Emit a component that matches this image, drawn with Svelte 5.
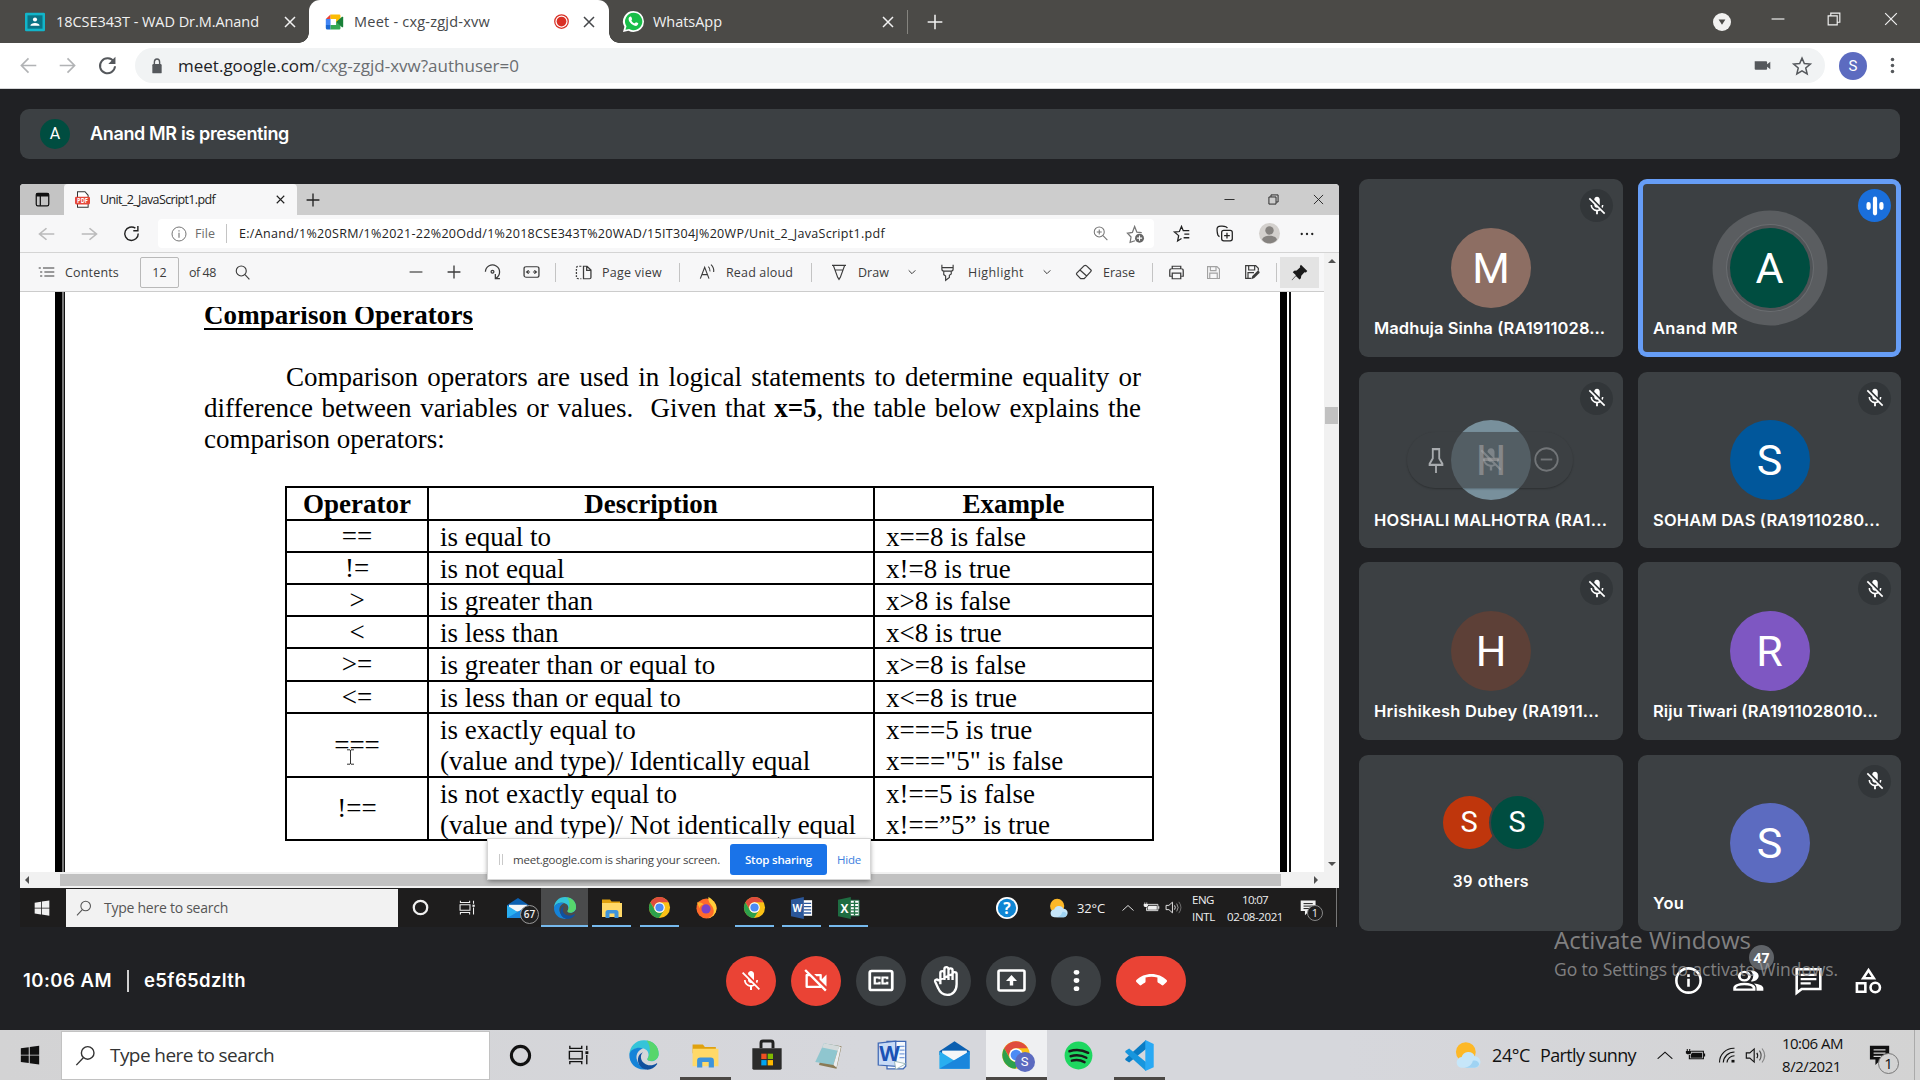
<script>
  // Adjusts tracking so that a label fills the width its slot reserves.
  function fit(node, width) {
    if (!width) return;
    const natural = node.getBoundingClientRect().width;
    const count = node.textContent.length;
    node.style.letterSpacing = (width - natural) / count + 'px';
  }

  const chrome = '<circle cx="12" cy="12" r="11" fill="#fbc116"/><path d="M2.500 6.500A11 11 0 0 1 21.500 6.500H12a5.500 5.500 0 0 0-5 7.500z" fill="#df4c3e"/><path d="M2.500 6.500A11 11 0 0 0 11.500 23L16.500 15A5.500 5.500 0 0 1 7 14.600z" fill="#2da14c"/><circle cx="12" cy="12" r="5.500" fill="#fff"/><circle cx="12" cy="12" r="4.300" fill="#4c8bf5"/>';
  const edge = '<path d="M12 1C5.500 1 1.300 5.800 1 11.800 3.500 7 8 6.300 11 7c3.500.8 4.800 3.400 4.300 6-.4 1.600-1.200 2-.6 2.800 1.600 1.900 8.300 1 8.300-4.600C23 5 18 1 12 1z" fill="#35c4d8"/><path d="M14 1.200C19.500 2 23 6 23 11.200c0 4-4.500 6-7.500 5-1.300-.6-1.200-1.200-.4-2.200C17 10 17 5 14 1.200z" fill="#57d66c"/><path d="M1 11.800C2 7 8 5.800 11.300 7.200 7 8.500 5.600 12.500 6.800 16c1.200 3.800 4.200 6.300 7.200 6.700C6.500 24 .8 18.500 1 11.800z" fill="#1583d8"/><path d="M11.300 10c-3 2.200-2 8.500 4 9.600 2.500.4 4.400-.3 5.900-1.300.5-.3.9.2.6.7-3.200 4.800-9.600 5.200-12.600 1.500C6.300 17 7 11.500 11.300 10z" fill="#10509e"/>';
  const folder = '<path d="M2 3.500h8l1.500 2H20v5H2z" fill="#e0a10e"/><path d="M2 7h20v14H2z" fill="#ffd968"/><path d="M5.500 22v-5.500a2.500 2.500 0 0 1 2.500-2.500h8a2.500 2.500 0 0 1 2.500 2.500V22h-4v-4.500h-5V22z" fill="#3d94dc"/>';
  const mail = '<path d="M1 9 12 1l11 8v3H1z" fill="#0b5fb0"/><path d="M3 8.500h18V16H3z" fill="#f4f6f8"/><path d="M1 9l11 7.500L23 9v14H1z" fill="#29aef0"/><path d="M1 23 23 9v14z" fill="#1a86dc"/>';
  const micOff = '<path fill="currentColor" d="M19 11h-1.700c0 .74-.16 1.430-.43 2.050l1.230 1.230c.56-.98.9-2.090.9-3.280zm-4.020.17c0-.06.02-.11.02-.17V5c0-1.660-1.340-3-3-3S9 3.340 9 5v.18l5.980 5.990zM4.270 3L3 4.270l6.010 6.010V11c0 1.660 1.330 3 2.990 3 .22 0 .44-.03.65-.08l1.660 1.660c-.71.33-1.500.52-2.310.52-2.760 0-5.300-2.100-5.300-5.100H5c0 3.410 2.720 6.230 6 6.720V21h2v-3.280c.91-.13 1.770-.45 2.540-.9L19.730 21 21 19.730 4.270 3z"/>';
  const speaker = '<g fill="none" stroke="currentColor" stroke-width="1.300"><path d="M1.500 9h4l5-4.500v15L5.500 15h-4z"/><path d="M13.500 9q2 3 0 6"/><path d="M16.500 6.500q4 5.500 0 11" opacity=".65"/><path d="M19.500 4q6 8 0 16" opacity=".4"/></g>';
  const weather = '<circle cx="11" cy="9.500" r="8.500" fill="#fdb827"/><path d="M8 23a4.600 4.600 0 0 1-.6-9.200 6 6 0 0 1 11.200-.8A5 5 0 0 1 18.500 23z" fill="#c6e6f9"/><path d="M8 23c5 0 8-2 9-6 2-1 5 0 5.500 3-1 2.500-2.500 3-4 3z" fill="#9fd3f3"/>';
  const taskview = '<g fill="none" stroke="currentColor" stroke-width="1.500"><path d="M2 1v3h13V1M2 23v-3h13v3M1.500 7.500h14v9h-14zM20.500 1v5M20.500 12v11"/></g><path d="M19 7.500h3.200v3.400H19z" fill="currentColor"/>';
  const winlogo = '<path d="M1 4l9.500-1.400v9H1zM11.700 2.400 23 .8v10.800H11.700zM1 12.700h9.500v9L1 20.300zM11.700 12.700H23v10.800l-11.300-1.600z" fill="currentColor"/>';
  const search = '<g fill="none" stroke="currentColor" stroke-width="1.600"><circle cx="14.500" cy="9" r="7.200"/><path d="M9.500 14.500 1.500 23"/></g>';
  const cross = '<path d="M2 2 22 22M22 2 2 22" stroke="currentColor" fill="none" stroke-width="3"/>';
  const thinCross = '<path d="M2 2 22 22M22 2 2 22" stroke="currentColor" fill="none" stroke-width="2"/>';
  const plus = '<path d="M12 1v22M1 12h22" stroke="currentColor" fill="none" stroke-width="2.300"/>';
  const minus = '<path d="M1 12h22" stroke="currentColor" fill="none" stroke-width="2"/>';
  const arrow = '<path d="M23 12H2.500M12 2 2 12 12 22" stroke="currentColor" fill="none" stroke-width="2.300"/>';
  const arrowR = '<path d="M1 12h20.500M12 2 22 12 12 22" stroke="currentColor" fill="none" stroke-width="2.300"/>';
  const restore = '<path d="M2 6.500h15.500V22H2zM6.500 6V2H22v15.500h-4" stroke="currentColor" fill="none" stroke-width="2"/>';
  const chevUp = '<path d="M1 18 12 6l11 12" stroke="currentColor" fill="none" stroke-width="2"/>';
  const chevDown = '<path d="M2 7l10 10L22 7" stroke="currentColor" fill="none" stroke-width="3"/>';
  const battery = '<path d="M7 7h14v10H5v-5" stroke="currentColor" fill="none" stroke-width="1.300"/><path d="M8 9h11.500v6.500H6.500V12z" fill="currentColor"/><path d="M21.500 10H23v4h-1.500zM1 6.500h6v3L5.500 11h-3L1 9.500zM2 4h1.200v3H2zM4.800 4H6v3H4.800z" fill="currentColor"/>';
  const star = '<path d="M12 2.500l2.800 6.600 7.200.6-5.500 4.700 1.700 7L12 17.700l-6.200 3.700 1.700-7L2 9.700l7.200-.6z" fill="none" stroke="currentColor" stroke-width="1.800"/>';
  const notif = '<path d="M1 2h21v15h-9l-6 6v-6H1z" fill="currentColor"/><path d="M5 6.500h13M5 10h13M5 13.500h9" class="cut" stroke-width="1.400"/>';

  const icons = {
    chrome, edge, folder, mail, micOff, speaker, weather, taskview, winlogo, search, cross, thinCross,
    plus, minus, arrow, arrowR, restore, chevUp, chevDown, battery, star, notif,
    classroom: '<rect x="0" y="1" width="24" height="22" rx="1.500" fill="#12b5c9"/><rect x="3" y="4" width="18" height="16" fill="#0b7385"/><circle cx="12" cy="9" r="2.500" fill="#fff"/><path d="M6.500 16.500c0-4.500 11-4.500 11 0z" fill="#fff"/>',
    meet: '<path d="M1 8 7 2v6z" fill="#ea4335"/><path d="M7 2h11q1.500 0 1.500 1.500V9L14 13V8H7z" fill="#fbbc04"/><path d="M1 8h6v8H1z" fill="#4285f4"/><path d="M1 16h6v6H3q-2 0-2-2z" fill="#1967d2"/><path d="M7 16h7v-4l5.500 4v4.500q0 1.500-1.500 1.500H7z" fill="#34a853"/><path d="M14 12l7.500-7q1.500-.5 1.500 1v12q0 1.500-1.500 1z" fill="#188038"/>',
    record: '<circle cx="12" cy="12" r="10.800" fill="none" stroke="#d93025" stroke-width="2"/><circle cx="12" cy="12" r="7.800" fill="#d93025"/>',
    whatsapp: '<path d="M12 0a12 12 0 0 1 0 24c-2 0-4-.5-5.700-1.500L0 24l1.600-6A12 12 0 0 1 12 0z" fill="#fff"/><path d="M12 2a10 10 0 1 1-5 18.600L2.800 21.500 4 17.500A10 10 0 0 1 12 2z" fill="#19be49"/><path d="M8 6.500c1-.3 1.400 0 1.800 1l.6 1.500c.2.600-.8 1.400-.8 1.800.6 1.400 2 2.700 3.600 3.300.6.100 1.200-1.400 1.700-1.300l2.200 1c1 .6-.4 3.200-2.200 3.200-3.500 0-8.500-4.500-8.500-8 0-1.200.8-2.200 1.600-2.500z" fill="#fff"/>',
    drop: '<circle cx="12" cy="12" r="12" fill="#f1f1f0"/><path d="M7.500 8.500h9L12 15.800z" fill="#4b4a47"/>',
    reload: '<path d="M20 7.200A9.500 9.500 0 1 0 21.500 13" stroke="currentColor" fill="none" stroke-width="2.500"/><path d="M22 1v9h-9z" fill="currentColor"/>',
    reloadThin: '<path d="M17.500 4.500A9.500 9.500 0 1 0 21.500 12M21 1.500V8h-6.500" stroke="currentColor" fill="none" stroke-width="2"/>',
    lock: '<rect x="4" y="9" width="16" height="14" rx="1.800" fill="currentColor"/><path d="M7.500 10V6a4.500 4.500 0 0 1 9 0v4" fill="none" stroke="currentColor" stroke-width="2.400"/>',
    camera: '<path d="M1 4h16a1.500 1.500 0 0 1 1.500 1.500V9.500L23 5v14l-4.500-4.500v4A1.500 1.500 0 0 1 17 20H2.500A1.500 1.500 0 0 1 1 18.500z" fill="currentColor"/>',
    dots: '<g fill="currentColor"><circle cx="12" cy="3.500" r="2.500"/><circle cx="12" cy="12" r="2.500"/><circle cx="12" cy="20.500" r="2.500"/></g>',
    hdots: '<g fill="currentColor"><circle cx="3" cy="12" r="2"/><circle cx="12" cy="12" r="2"/><circle cx="21" cy="12" r="2"/></g>',
    sidebar: '<rect x="2" y="2" width="20" height="20" rx="2.500" fill="none" stroke="#111" stroke-width="2"/><path d="M2 2h20v5H2z" fill="#111"/><path d="M8.500 6v16" stroke="#111" stroke-width="2"/>',
    pdf: '<path d="M4 1h12l5 5v17H4z" fill="#fff" stroke="#333" stroke-width="1.600"/><rect x="0" y="8" width="24" height="11" rx="2" fill="#e5483b"/><text x="12" y="16.800" font-size="9" font-weight="700" fill="#fff" text-anchor="middle" font-family="Open Sans, sans-serif">PDF</text>',
    info: '<circle cx="12" cy="12" r="10.500" fill="none" stroke="currentColor" stroke-width="1.500"/><path d="M12 10v7.500M12 6.200v2" stroke="currentColor" stroke-width="1.700"/>',
    zoomIn: '<g fill="none" stroke="currentColor" stroke-width="1.700"><circle cx="10" cy="9.500" r="8"/><path d="M16 15.500l7 7M10 5.500v8M6 9.500h8"/></g>',
    starPlus: '<path d="M12 21l-6.500 2 1.200-7L2 11l6.500-1L11.500 2l3 7.500 6.500.8" fill="none" stroke="currentColor" stroke-width="1.700"/><circle cx="18" cy="17.500" r="6" fill="#666"/><path d="M18 14v7M14.500 17.500h7" stroke="#fff" stroke-width="1.500"/>',
    favs: '<path d="M12 19l-5.500 3.500 1.500-7.500L2 10l7-.8L12 2l2.500 6H23M16 13h7M15 18h8" fill="none" stroke="currentColor" stroke-width="1.800"/>',
    collect: '<g fill="none" stroke="currentColor" stroke-width="1.800"><rect x="8" y="7.500" width="15" height="15" rx="3"/><path d="M5 16.500C1.500 15 2 12 1.500 7 1 3 3 1.500 7 1.500s8-.5 9 3M15.500 11v8M11.500 15h8"/></g>',
    person: '<circle cx="12" cy="12" r="12" fill="#d3d0cd"/><circle cx="12" cy="8.500" r="4.800" fill="#85827f"/><path d="M3.500 19c1-6 16-6 17 0-4 5.500-13 5.500-17 0z" fill="#85827f"/>',
    list: '<path d="M1 4h3M7 4h16M3 12h3M9 12h14M3 20h3M9 20h14" stroke="currentColor" stroke-width="2"/>',
    find: '<g fill="none" stroke="currentColor" stroke-width="1.800"><circle cx="10" cy="9.500" r="8"/><path d="M16 15.500l7 7.500"/></g>',
    rotate: '<g fill="none" stroke="currentColor" stroke-width="1.800"><path d="M2 11A10 10 0 1 1 17 20M16 14v6.500h6.500" /><circle cx="12" cy="11" r="2"/></g>',
    fitw: '<g fill="none" stroke="currentColor" stroke-width="1.800"><rect x="1.500" y="3" width="21" height="18" rx="3"/><path d="M5 12h5M14 12h5M8 9l-3 3 3 3M16 9l3 3-3 3"/></g>',
    pageview: '<path d="M9 2H5q-3 0-3 3v14q0 3 3 3h4" stroke="currentColor" stroke-width="1.800" fill="none" stroke-dasharray="3 2"/><path d="M12 2h5l5.500 6v12q0 2-2 2H12zM16.500 2.500V8.500h5.500" stroke="currentColor" stroke-width="1.800" fill="none"/>',
    read: '<path d="M2 22 8.500 5 15 22M4.500 16h8M14 4q3 2.500 2.500 7M18 1q5 5 4 11" stroke="currentColor" stroke-width="1.700" fill="none"/>',
    draw: '<path d="M1.500 2h21M3.500 2 10 20l2 3 2-3 6.500-18M6.500 9h11" stroke="currentColor" stroke-width="1.800" fill="none"/>',
    highlight: '<path d="M3 1v6q0 3 3 3h12q3 0 3-3V1M3 5h18M6 10v5l3 2v6l6-4v-3l3-2v-4" stroke="currentColor" stroke-width="1.800" fill="none"/>',
    erase: '<path d="M13 2.500 2.500 13.500q-1 1.500 0 2.500l5.500 6h5L22.500 11q1-1 0-2L16 2.500q-1.500-1-3 0zM7 9l9.500 9" stroke="currentColor" stroke-width="1.700" fill="none"/>',
    print: '<path d="M6 6V2h12v4M5 18H2.500V9q0-3 3-3h13q3 0 3 3v9H19M6 13h12v9H6z" stroke="currentColor" stroke-width="1.800" fill="none"/>',
    save: '<path d="M2.500 2.500h15l4 4v15h-19zM7 3v6h9V3M6 21v-8h12v8" stroke="currentColor" stroke-width="1.800" fill="none"/>',
    saveEdit: '<path d="M11 21.500H2.500v-19h15l4 4V10M7 3v6h9V3M6 21v-8h9" stroke="currentColor" stroke-width="1.800" fill="none"/><path d="M11 23l1.500-5 8-8q3 0 3 3l-8 8z" fill="currentColor"/>',
    pin: '<path d="M14 1l9 9-2 2-2-.5-4.500 5L14 20l-2 2-5-5L1.500 23 1 22.500 7 16 2.500 11.500l2-2L8 9l5-4.500L12.500 3z" fill="currentColor"/>',
    firefox: '<circle cx="12" cy="13" r="10.500" fill="#ff6a2b"/><path d="M14 1c5 3 8.500 7 8.500 12A10.500 10.500 0 0 1 12 23.500c5-1 8-4 7.500-8.500C19 9 13 8 14 1z" fill="#ffce3a"/><circle cx="11.500" cy="13.500" r="4.800" fill="#7b42c9"/><path d="M2 7c2-1 5 0 7 2-3 0-4 2-4 4z" fill="#ffb02e"/>',
    word: '<path d="M11 3.500h12v17H11z" fill="#fff"/><path d="M14 7h8M14 10.500h8M14 14h8M14 17.500h8" stroke="#2b579a" stroke-width="1.500"/><path d="M0 3 14 0v24L0 21z" fill="#2b579a"/><text x="7" y="16.500" font-size="11" font-weight="700" fill="#fff" text-anchor="middle" font-family="Open Sans, sans-serif">W</text>',
    excel: '<path d="M11 3.500h12v17H11z" fill="#fff" stroke="#217346"/><path d="M14 7h8M14 10.500h8M14 14h8M14 17.500h8M18 4v16" stroke="#217346" stroke-width="1.500"/><path d="M0 3 14 0v24L0 21z" fill="#1e6c41"/><text x="7" y="17" font-size="13" font-weight="700" fill="#fff" text-anchor="middle" font-family="Open Sans, sans-serif">X</text>',
    help: '<circle cx="12" cy="12" r="12" fill="#fff"/><circle cx="12" cy="12" r="10" fill="#0f86d4"/><text x="12" y="18" font-size="17" font-weight="700" fill="#fff" text-anchor="middle" font-family="Open Sans, sans-serif">?</text>',
    ring: '<circle cx="12" cy="12" r="9.500" fill="none" stroke="currentColor" stroke-width="3.200"/>',
    bars: '<path d="M5 10v4M12 4v16M19 10v4" stroke="#fff" stroke-width="4.600" stroke-linecap="round"/>',
    tilePin: '<path d="M7.500 2h9M8.500 2.500v8L5 15.500v1h14v-1l-3.500-5v-8M12 16.500V24" fill="none" stroke="currentColor" stroke-width="2"/>',
    remove: '<circle cx="12" cy="12" r="10.800" fill="none" stroke="currentColor" stroke-width="1.700"/><path d="M6.500 12h11" stroke="currentColor" stroke-width="1.800"/>',
    camOff: '<path fill="currentColor" d="M9.560 8l-2-2-4.150-4.140L2 3.270 4.730 6H4c-.55 0-1 .45-1 1v10c0 .55.45 1 1 1h12c.21 0 .39-.08.55-.18L19.730 21l1.410-1.410-8.860-8.860L9.560 8zM5 16V8h1.730l8 8H5zm10-8v2.610l6 6V6.500l-4 4V7c0-.55-.45-1-1-1h-5.610l2 2H15z"/>',
    cc: '<rect x="3" y="3.500" width="18" height="17" rx="1.500" fill="none" stroke="currentColor" stroke-width="2.200"/><path d="M10.800 10.800V9.300H7v5.400h3.800v-1.500M17 10.800V9.300h-3.800v5.400H17v-1.500" fill="none" stroke="currentColor" stroke-width="1.800"/>',
    hand: '<path d="M6.500 18V7.500a1.800 1.800 0 0 1 3.600 0V14M10.100 8V3.800a1.800 1.800 0 0 1 3.600 0V14M13.700 5a1.800 1.800 0 0 1 3.600 0v9M17.300 8.500a1.800 1.800 0 0 1 3.600 0V18c0 6-3.400 10-8.200 10-4 0-6.500-2-8-6L2 15.800c-.7-2 1.500-3 2.700-1.300z" fill="none" stroke="currentColor" stroke-width="2.100" stroke-linejoin="round"/>',
    present: '<rect x="1.500" y="1.500" width="26" height="20" rx="1.500" fill="none" stroke="currentColor" stroke-width="2.600"/><path d="M14.500 6 20 12h-3.800v4.500h-3.400V12H9z" fill="currentColor"/>',
    hangup: '<path fill="currentColor" d="M12 9c-1.600 0-3.150.25-4.600.72v3.100c0 .39-.23.74-.56.9-.98.49-1.870 1.120-2.660 1.850-.18.18-.43.28-.7.28-.28 0-.53-.11-.71-.29L.29 13.080c-.18-.17-.29-.42-.29-.7 0-.28.11-.53.29-.71C3.340 8.780 7.460 7 12 7s8.660 1.780 11.710 4.670c.18.18.29.43.29.71 0 .28-.11.53-.29.71l-2.480 2.480c-.18.18-.43.29-.71.29-.27 0-.52-.11-.7-.28-.79-.74-1.690-1.360-2.670-1.850-.33-.16-.56-.5-.56-.9v-3.100C15.150 9.250 13.600 9 12 9z"/>',
    infoBold: '<circle cx="12" cy="12" r="10.800" fill="none" stroke="currentColor" stroke-width="2.300"/><path d="M12 10.500v7M12 6.500v2.300" stroke="currentColor" stroke-width="2.300"/>',
    people: '<g fill="none" stroke="currentColor" stroke-width="2.200"><circle cx="8.800" cy="7.500" r="3.900"/><path d="M1.300 20v-1.500c0-5 15-5 15 0V20z"/></g><path d="M13.800 2.700a4.900 4.900 0 1 1 0 9.500 7 7 0 0 0 0-9.500zM18.200 21v-2.500c0-2-.8-3.300-2-4.300 3.500.3 7.300 1.700 7.300 4.500V21z" fill="currentColor"/>',
    chat: '<path d="M1.500 2h21v17.500H6L1.500 23z" fill="none" stroke="currentColor" stroke-width="2.300"/><path d="M5 7h14M5 10.800h14M5 14.600h9" stroke="currentColor" stroke-width="2"/>',
    shapes: '<g fill="none" stroke="currentColor" stroke-width="2.300"><path d="M12 2.800 7.300 10h9.400zM1.700 14.500h7.500v7.500H1.700z"/><circle cx="18" cy="18.200" r="4.200"/></g>',
    store: '<path d="M7.500 7V3q0-1.500 1.500-1.500h6q1.500 0 1.500 1.500v4" fill="none" stroke="#222" stroke-width="2.200"/><path d="M1 7h22v15q0 1-1 1H2q-1 0-1-1z" fill="#2b2b2b"/><path d="M7.700 11h4v4h-4z" fill="#f25022"/><path d="M12.500 11h4v4h-4z" fill="#7fba00"/><path d="M7.700 15.800h4v4h-4z" fill="#00a4ef"/><path d="M12.500 15.800h4v4h-4z" fill="#ffb900"/>',
    notepad: '<path d="M9 3 22 5l-4 18L4 20z" fill="#8a7a55"/><path d="M8 2.500 20 5l-4.500 15L1 17.500z" fill="#8fc6cf"/><path d="M8 2.500 20 5l-1 3.500L6.500 6z" fill="#d4dadb"/><path d="M20 5l1.500.5L18 22l-2.500-2z" fill="#eceef0"/>',
    word10: '<path d="M8 1h15v20l-2 2H8z" fill="#f5f8fd" stroke="#3f68b5"/><path d="M18 5h4M18 8h4M18 11h4M18 14h4" stroke="#7ea0dc" stroke-width="1"/><path d="M1 2.500 15 1v20L1 20z" fill="#c8dbf6" stroke="#3f68b5"/><text x="10" y="17" font-size="17" font-weight="700" fill="#1b52b5" text-anchor="middle" font-family="Open Sans, sans-serif">W</text><path d="M14 17l9 2-8 4.500z" fill="#fff" stroke="#8aa" stroke-width=".6"/>',
    spotify: '<circle cx="12" cy="12" r="11.500" fill="#1ed760"/><path d="M4.500 8.500q8-2.500 15.500 1.300M5.500 12.600q7-2 13 1.300M6.500 16.300q5.500-1.500 10.500 1.200" fill="none" stroke="#1a1a1a" stroke-width="2" stroke-linecap="round"/>',
    vscode: '<path d="M17 0v7L4 17.500l-3-2v-1z" fill="#0a7cc4"/><path d="M17 24v-7L4 6.500l-3 2v1z" fill="#1796de"/><path d="M16.500 0 23 3v18l-6.500 3z" fill="#29a9f4"/>',
    wifi: '<g fill="none" stroke="currentColor" stroke-width="1.500"><path d="M2 22A19 19 0 0 1 22 3" /><path d="M7 22A15 15 0 0 1 22 8"/><path d="M12 22a10 10 0 0 1 10-9"/></g><path d="M18 18.500h4V22h-4z" fill="currentColor"/>'
  };

  const operators = [
    ['==', ['is equal to'], ['x==8 is false']],
    ['!=', ['is not equal'], ['x!=8 is true']],
    ['>', ['is greater than'], ['x>8 is false']],
    ['<', ['is less than'], ['x<8 is true']],
    ['>=', ['is greater than or equal to'], ['x>=8 is false']],
    ['<=', ['is less than or equal to'], ['x<=8 is true']],
    ['===', ['is exactly equal to', '(value and type)/ Identically equal'], ['x===5 is true', 'x==="5" is false']],
    ['!==', ['is not exactly equal to', '(value and type)/ Not identically equal'], ['x!==5 is false', 'x!==”5” is true']]
  ];

  const people = [
    { name: 'Madhuja Sinha (RA1911028...', w: 231, letter: 'M', tone: 'tan' },
    { name: 'Anand MR', w: 85, letter: 'A', tone: 'green', speaking: true },
    { name: 'HOSHALI MALHOTRA (RA1...', w: 233, letter: 'H', tone: 'slate', hovered: true },
    { name: 'SOHAM DAS (RA19110280...', w: 227, letter: 'S', tone: 'blue' },
    { name: 'Hrishikesh Dubey (RA1911...', w: 225, letter: 'H', tone: 'brown' },
    { name: 'Riju Tiwari (RA1911028010...', w: 225, letter: 'R', tone: 'purple' },
    { name: '39 others', w: 76, group: true },
    { name: 'You', w: 31, letter: 'S', tone: 'indigo' }
  ];
</script>

{#snippet icon(name, w, h = w, box = '0 0 24 24')}
  <svg class="ico" width={w} height={h} viewBox={box} preserveAspectRatio="none">{@html icons[name]}</svg>
{/snippet}
{#snippet label(text, w, cls = '')}<span class="label {cls}" use:fit={w}>{text}</span>{/snippet}

<div class="screen">
  <header class="tabs">
    {@render icon('classroom', 20)}
    {@render label('18CSE343T - WAD Dr.M.Anand', 203)}
    {@render icon('cross', 12)}
    <div class="active-tab">
      {@render icon('meet', 19, 18)}
      {@render label('Meet - cxg-zgjd-xvw', 136)}
      {@render icon('record', 15)}
      {@render icon('cross', 12)}
    </div>
    {@render icon('whatsapp', 21)}
    {@render label('WhatsApp', 69)}
    {@render icon('cross', 12)}
    <i class="tab-rule"></i>
    {@render icon('plus', 16)}
    {@render icon('drop', 18)}
    <span class="raise">{@render icon('minus', 14)}</span>
    <span class="raise">{@render icon('restore', 14)}</span>
    <span class="raise">{@render icon('thinCross', 14)}</span>
  </header>

  <nav class="toolbar">
    <span class="faded">{@render icon('arrow', 17)}</span>
    <span class="faded">{@render icon('arrowR', 17)}</span>
    {@render icon('reload', 19)}
    <div class="omnibox">
      {@render icon('lock', 14, 16)}
      <span class="label url" use:fit={341}><b>meet.google.com</b>/cxg-zgjd-xvw?authuser=0</span>
      {@render icon('camera', 17, 13)}
      {@render icon('star', 20)}
    </div>
    <span class="profile">S</span>
    {@render icon('dots', 17, 17)}
  </nav>

  <main class="meet">
    <div class="banner"><span class="mini">A</span>{@render label('Anand MR is presenting', 199)}</div>

    <div class="stage">
      <section class="shared">
        <div class="e-tabs">
          <div class="e-side">{@render icon('sidebar', 15)}</div>
          <div class="e-tab">
            {@render icon('pdf', 15, 17)}
            {@render label('Unit_2_JavaScript1.pdf', 115)}
            {@render icon('cross', 9)}
          </div>
          {@render icon('plus', 14)}
          {@render icon('minus', 11)}
          {@render icon('restore', 11)}
          {@render icon('thinCross', 11)}
        </div>
        <div class="e-address">
          <span class="faded">{@render icon('arrow', 17, 14)}</span>
          <span class="faded">{@render icon('arrowR', 17, 14)}</span>
          {@render icon('reloadThin', 17)}
          <div class="e-input">
            {@render icon('info', 16)}
            {@render label('File', 20, 'grey')}
            <i class="rule"></i>
            {@render label('E:/Anand/1%20SRM/1%2021-22%20Odd/1%2018CSE343T%20WAD/15IT304J%20WP/Unit_2_JavaScript1.pdf', 646)}
            {@render icon('zoomIn', 15)}
            {@render icon('starPlus', 18)}
          </div>
          {@render icon('favs', 17)}
          {@render icon('collect', 17)}
          {@render icon('person', 21)}
          {@render icon('hdots', 14)}
        </div>
        <div class="e-body">
          <div class="e-left">
            <div class="e-tools">
              {@render icon('list', 17, 12)}
              {@render label('Contents', 54)}
              <span class="page">12</span>
              {@render label('of 48', 27)}
              {@render icon('find', 15)}
              {@render icon('minus', 14)}
              {@render icon('plus', 14)}
              {@render icon('rotate', 17)}
              {@render icon('fitw', 17, 14)}
              <i class="rule"></i>
              {@render icon('pageview', 17, 15)}
              {@render label('Page view', 60)}
              <i class="rule"></i>
              {@render icon('read', 16)}
              {@render label('Read aloud', 67)}
              <i class="rule"></i>
              {@render icon('draw', 16)}
              {@render label('Draw', 31)}
              {@render icon('chevDown', 8)}
              {@render icon('highlight', 15, 17)}
              {@render label('Highlight', 56)}
              {@render icon('chevDown', 8)}
              {@render icon('erase', 17, 16)}
              {@render label('Erase', 32)}
              <i class="rule"></i>
              {@render icon('print', 17, 15)}
              <span class="faded">{@render icon('save', 15)}</span>
              {@render icon('saveEdit', 16)}
              <i class="rule"></i>
              <span class="pinned">{@render icon('pin', 17)}</span>
            </div>
            <div class="doc">
              <article>
                <h1><span class="label" use:fit={269}>Comparison Operators</span></h1>
                <p class="indent">Comparison operators are used in logical statements to determine equality or</p>
                <p>difference between variables or values.&nbsp; Given that <b>x=5</b>, the table below explains the</p>
                <p class="last">comparison operators:</p>
                <div class="table">
                  <b class="mid">Operator</b><b class="mid">Description</b><b class="mid">Example</b>
                  {#each operators as [op, desc, ex]}
                    <div class="mid op">{op}</div>
                    <div class="cell">{#each desc as line}<div>{line}</div>{/each}</div>
                    <div class="cell">{#each ex as line}<div>{line}</div>{/each}</div>
                  {/each}
                </div>
              </article>
              <div class="share">
                <i class="grip"></i>
                {@render label('meet.google.com is sharing your screen.', 207)}
                <span class="stop">{@render label('Stop sharing', 67)}</span>
                <span class="hide">{@render label('Hide', 24)}</span>
              </div>
              <svg class="caret" width="9" height="16" viewBox="0 0 9 16"><path d="M1 .8h3l.5.500.5-.5h3M4.500 1v14M1 15.200h3l.5-.5.5.500h3" fill="none" stroke="#333" /></svg>
            </div>
          </div>
          <div class="vscroll"><i class="tri up"></i><i class="thumb"></i><i class="tri down"></i></div>
        </div>
        <div class="hscroll"><i class="tri left"></i><i class="thumb"></i><i class="tri right"></i></div>
        <div class="e-taskbar">
          {@render icon('winlogo', 16)}
          <div class="e-search">{@render icon('search', 16)}{@render label('Type here to search', 124)}</div>
          {@render icon('ring', 17)}
          {@render icon('taskview', 17, 15)}
          <span class="app badge-host">{@render icon('mail', 24, 22)}<em>67</em></span>
          <span class="app open lit">{@render icon('edge', 24)}</span>
          <span class="app open">{@render icon('folder', 24)}</span>
          <span class="app open">{@render icon('chrome', 23)}</span>
          <span class="app">{@render icon('firefox', 23)}</span>
          <span class="app open">{@render icon('chrome', 23)}</span>
          <span class="app open">{@render icon('word', 22)}</span>
          <span class="app open">{@render icon('excel', 22)}</span>
          {@render icon('help', 22)}
          {@render icon('weather', 20)}
          {@render label('32°C', 28)}
          {@render icon('chevUp', 12, 10)}
          {@render icon('battery', 17, 15)}
          {@render icon('speaker', 17)}
          <span class="stack">{@render label('ENG', 22)}{@render label('INTL', 23)}</span>
          <span class="stack centre">{@render label('10:07', 26)}{@render label('02-08-2021', 56)}</span>
          <span class="notice">{@render icon('notif', 17)}<em>1</em></span>
          <i class="e-peek"></i>
        </div>
      </section>

      <section class="tiles">
        {#each people as p}
          <div class="tile" class:speaking={p.speaking}>
            {#if p.group}
              <div class="pair"><span class="orange">S</span><span class="green">S</span></div>
              <div class="others">{@render label(p.name, p.w)}</div>
            {:else}
              <div class="face {p.tone}" class:dim={p.hovered}><span>{p.letter}</span></div>
              <div class="name">{@render label(p.name, p.w)}</div>
              {#if p.speaking}
                <div class="corner talk">{@render icon('bars', 22, 22)}</div>
              {:else}
                <div class="corner">{@render icon('micOff', 22)}</div>
              {/if}
              {#if p.hovered}
                <div class="hover">{@render icon('tilePin', 22, 26)}<span class="muted">{@render icon('micOff', 28)}</span><span class="muted">{@render icon('remove', 25)}</span></div>
              {/if}
            {/if}
          </div>
        {/each}
      </section>
    </div>

    <footer class="controls">
      {@render label('10:06 AM', 89)}
      <i class="rule"></i>
      {@render label('e5f65dzlth', 102)}
      <div class="buttons">
        <span class="btn red">{@render icon('micOff', 24)}</span>
        <span class="btn red">{@render icon('camOff', 28)}</span>
        <span class="btn">{@render icon('cc', 30, 27)}</span>
        <span class="btn">{@render icon('hand', 26, 32, '0 0 23 30')}</span>
        <span class="btn">{@render icon('present', 29, 23, '0 0 29 23')}</span>
        <span class="btn">{@render icon('dots', 27, 23)}</span>
        <span class="btn red wide">{@render icon('hangup', 31)}</span>
      </div>
      <div class="side">
        {@render icon('infoBold', 27)}
        <span class="counted">{@render icon('people', 31, 26)}<em>47</em></span>
        {@render icon('chat', 27)}
        {@render icon('shapes', 27)}
      </div>
    </footer>
  </main>

  <footer class="taskbar">
    {@render icon('winlogo', 20)}
    <div class="find">{@render icon('search', 21)}{@render label('Type here to search', 164)}</div>
    {@render icon('ring', 23)}
    {@render icon('taskview', 22, 20)}
    <span class="app">{@render icon('edge', 32)}</span>
    <span class="app open">{@render icon('folder', 31, 30)}</span>
    <span class="app">{@render icon('store', 32, 32)}</span>
    <span class="app">{@render icon('notepad', 30)}</span>
    <span class="app">{@render icon('word10', 30)}</span>
    <span class="app">{@render icon('mail', 33, 30)}</span>
    <span class="app open lit badge-host">{@render icon('chrome', 30)}<em>S</em></span>
    <span class="app">{@render icon('spotify', 29)}</span>
    <span class="app open">{@render icon('vscode', 31)}</span>
    <span class="sky">{@render icon('weather', 28)}</span>
    {@render label('24°C', 38)}
    {@render label('Partly sunny', 96)}
    {@render icon('chevUp', 16, 13)}
    {@render icon('battery', 21, 18)}
    {@render icon('wifi', 18, 18)}
    {@render icon('speaker', 21)}
    <span class="stack">{@render label('10:06 AM', 61)}{@render label('8/2/2021', 59)}</span>
    <span class="notice">{@render icon('notif', 22)}<em>1</em></span>
    <i class="peek"></i>
  </footer>

  <div class="watermark">
    <div class="big">{@render label('Activate Windows', 197)}</div>
    <div>{@render label('Go to Settings to activate Windows.', 284)}</div>
  </div>
</div>

<style>
  :global(body) { margin: 0; }
  .screen {
    position: relative;
    width: 1920px; height: 1080px; overflow: hidden;
    display: grid; grid-template-rows: 43px 46px 941px 50px;
    font-family: "Open Sans", "Noto Sans", sans-serif;
    background: #202124;
  }
  .ico { display: block; flex: none; overflow: visible; }
  .label { display: inline-block; white-space: nowrap; justify-self: start; }
  .rule { display: block; width: 1px; height: 19px; background: #c4c4c4; }
  .faded { opacity: .45; }

  .tabs {
    display: grid; align-items: center; padding-left: 25px; color: #f1f1f1; background: #4b4a47; font-size: 14.500px;
    grid-template-columns: 31px 228px 16px 323px 30px 229px 25px 20px 786px 58px 56px 57px 1fr;
  }
  .active-tab {
    position: relative; width: 284px; height: 43px; margin-left: 9px; padding-left: 16px; color: #45474a;
    display: grid; grid-template-columns: 29px 200px 29px 1fr; align-items: center;
    background: #fff; border-radius: 11px 11px 0 0;
  }
  .active-tab::before, .active-tab::after { content: ""; position: absolute; bottom: 0; width: 10px; height: 10px; }
  .active-tab::before { left: -10px; background: radial-gradient(circle at 0 0, transparent 9.500px, #fff 10px); }
  .active-tab::after { right: -10px; background: radial-gradient(circle at 100% 0, transparent 9.500px, #fff 10px); }
  .tab-rule { width: 1px; height: 24px; background: #85847f; }
  .raise { margin-bottom: 6px; }

  .toolbar {
    display: grid; align-items: center; padding-left: 20px; background: #fff; color: #55585c;
    border-bottom: 1px solid #d5d6d8; grid-template-columns: 39px 39px 37px 1704px 45px 1fr;
  }
  .omnibox {
    width: 1668px; height: 35px; padding-left: 22px; border-radius: 18px; background: #f1f3f4;
    display: grid; align-items: center; grid-template-columns: 28px 1569px 38px 1fr;
  }
  .omnibox .ico:first-child { margin-left: -7px; }
  .url { font-size: 17px; color: #6a6d71; margin-left: -7px; }
  .url b { font-weight: 400; color: #202124; }
  .profile {
    width: 28px; height: 28px; border-radius: 50%; background: #5c6bc0; color: #fff; font: 15px/28px Roboto, sans-serif; text-align: center;
  }

  .meet { display: flex; flex-direction: column; background: #202124; color: #fff; }
  .banner {
    height: 50px; margin: 20px 20px 0; padding-left: 20px; border-radius: 9px; background: #3c4043;
    display: flex; align-items: center; gap: 20px; font: 600 18px/24px Inter, sans-serif;
  }
  .banner .label { padding-bottom: 1px; }
  .mini { width: 30px; height: 30px; border-radius: 50%; background: #004d40; font: 16px/30px Roboto, sans-serif; text-align: center; }
  .stage { display: flex; gap: 20px; height: 752px; margin-top: 20px; padding-left: 20px; }

  .shared { width: 1319px; height: 743px; margin-top: 5px; background: #fff; color: #222; display: flex; flex-direction: column; border-radius: 4px 4px 0 0; overflow: hidden; font-size: 12.500px; }
  .e-tabs { height: 31px; flex: none; background: #cdcdcd; display: grid; align-items: center; grid-template-columns: 44px 242px 918px 44px 45px 1fr; }
  .e-side { height: 31px; display: grid; place-items: center; background: #c4c4c4; }
  .e-tab { width: 222px; height: 31px; padding-left: 11px; border-radius: 4px 4px 0 0; background: #f7f7f8; display: grid; align-items: center; grid-template-columns: 25px 176px 1fr; }
  .e-address { height: 38px; flex: none; box-sizing: border-box; border-bottom: 1px solid #d4d4d4; background: #f7f7f8; padding-left: 18px; display: grid; align-items: center; grid-template-columns: 43px 42px 35px 1015px 43px 43px 41px 1fr; }
  .e-address .faded { opacity: .28; }
  .e-input { width: 983px; height: 29px; padding-left: 13px; border-radius: 4px; background: #fff; display: grid; align-items: center; grid-template-columns: 24px 31px 13px 854px 33px 1fr; }
  .e-input .ico { color: #777; }
  .grey { color: #6c6c6c; }
  .e-body { height: 619px; flex: none; display: flex; }
  .e-left { width: 1304px; display: flex; flex-direction: column; }
  .e-tools {
    height: 39px; flex: none; box-sizing: border-box; padding-left: 18px; background: #f7f7f8; border-bottom: 1px solid #ccc; color: #3c3c3c;
    display: grid; align-items: center;
    grid-template-columns: 27px 75px 49px 46px 174px 38px 37px 39px 32px 20px 27px 77px 20px 27px 85px 20px 27px 50px 32px 28px 75px 32px 28px 49px 16px 38px 38px 32px 4px 1fr;
  }
  .page { box-sizing: border-box; width: 39px; height: 31px; border: 1px solid #b9b9b9; border-radius: 2px; text-align: center; line-height: 29px; }
  .pinned { display: grid; place-items: center; width: 39px; height: 31px; background: #e3e3e3; color: #1a1a1a; }

  .doc { position: relative; height: 580px; box-sizing: border-box; padding-left: 35px; background: #fff; }
  article {
    width: 1215px; height: 580px; border-left: 7px solid #000; border-right: 7px solid #000; box-shadow: inset 2px 0 #777, inset 3px 0 #111, 2px 0 #fff, 4px 0 #111;
    padding-left: 3px; font: 27px/31px "Liberation Serif", serif; color: #000;
  }
  h1 { margin: 0 0 31px 139px; padding-top: 8px; font: 700 27px/31px "Liberation Serif", serif; }
  h1 .label { height: 31px; box-shadow: inset 0 -1px #fff, inset 0 -3px #000; clip-path: inset(7px 0 0 0); vertical-align: top; }
  p { width: 937px; margin: 0 0 0 139px; text-align-last: justify; }
  .indent { width: 855px; margin-left: 221px; }
  .last { text-align-last: left; }
  .table {
    width: 869px; box-sizing: border-box; margin: 31px 0 0 220px; padding: 2px; display: grid; gap: 2px;
    grid-template-columns: 140px 444px 277px; grid-template-rows: 31px 30px 30px 30px 30px 31px 30px 62px 61px;
  }
  .table > * { box-shadow: 0 0 0 2px #000; padding-top: 1px; box-sizing: border-box; min-height: 0; }
  .mid { text-align: center; }
  .table > .op { display: flex; align-items: center; justify-content: center; padding-top: 0; }
  .cell { padding-left: 11px; white-space: nowrap; }
  .share {
    position: absolute; left: 468px; top: 547px; width: 382px; height: 40px; box-sizing: border-box; padding-left: 11px; background: #fff; z-index: 2;
    box-shadow: 0 0 0 1px #d6d6d6, 0 2px 5px #0007; display: grid; align-items: center; grid-template-columns: 14px 217px 107px 1fr; font-size: 11.500px; color: #444;
  }
  .grip { width: 2px; height: 11px; border: solid #c9c9c9; border-width: 0 1px; }
  .stop { width: 97px; height: 31px; border-radius: 3px; background: #1a73e8; color: #fff; font-weight: 600; display: grid; place-items: center; }
  .stop :global(.label) { justify-self: center; }
  .hide { color: #3d7fe0; }
  .caret { position: absolute; left: 326px; top: 457px; }

  .vscroll { width: 15px; background: #f1f1f1; display: flex; flex-direction: column; align-items: center; padding: 6px 0; box-sizing: border-box; }
  .vscroll .thumb { width: 13px; height: 17px; margin-bottom: auto; background: #c1c1c1; }
  .tri { border: 4px solid transparent; }
  .up { border-bottom-color: #505050; border-top-width: 0; }
  .vscroll .up { margin-bottom: 144px; }
  .down { border-top-color: #505050; border-bottom-width: 0; }
  .left { border-right-color: #505050; border-left-width: 0; }
  .right { border-left-color: #505050; border-right-width: 0; }
  .hscroll { height: 16px; flex: none; background: #f1f1f1; display: grid; align-items: center; padding-left: 5px; grid-template-columns: 35px 1254px 1fr; justify-items: start; }
  .hscroll .thumb { width: 1221px; height: 12px; background: #c1c1c1; }
  .e-taskbar {
    height: 39px; flex: none; background: #1e1d1d; color: #f0f0f0; padding-left: 14px; display: grid; align-items: center; font-size: 13px;
    grid-template-columns: 32px 346px 47px 35px 47px 47px 48px 47px 48px 47px 47px 171px 52px 29px 45px 21px 22px 27px 35px 73px 36px 1fr;
  }
  .e-taskbar > :nth-child(2) { justify-self: start; }
  .e-search { width: 332px; height: 38px; background: #f2f2f2; color: #555; display: flex; align-items: center; gap: 12px; padding-left: 10px; box-sizing: border-box; font-size: 14px; }
  .e-peek { width: 1px; height: 39px; background: #777; }
  .app { position: relative; display: grid; place-items: center; height: 100%; width: 39px; justify-self: center; box-sizing: border-box; }
  .e-taskbar .app { height: 39px; justify-self: start; margin-left: 4px; }
  .e-taskbar .open { border-bottom: 2px solid #76b9ed; padding-top: 2px; }
  .e-taskbar .lit { width: 47px; margin-left: 0; background: #4a4b4c; }
  .badge-host em { position: absolute; font-style: normal; text-align: center; border-radius: 50%; }
  .e-taskbar .badge-host em { left: 22px; top: 17px; width: 17px; height: 17px; border: 1px solid #999; background: #222; font: 600 10px/17px "Open Sans", sans-serif; }
  .stack { display: flex; flex-direction: column; align-items: flex-start; }
  .centre { align-items: center; width: 56px; }
  .e-taskbar .stack { font-size: 11.500px; line-height: 17px; }
  .notice { position: relative; }
  .notice em { position: absolute; border-radius: 50%; font-style: normal; text-align: center; }
  .notice :global(.cut) { stroke: #1e1d1d; }
  .e-taskbar .notice em { left: 7px; top: 6px; width: 14px; height: 14px; border: 1px solid #888; background: #1e1d1d; font-size: 11px; line-height: 14px; }

  .tiles { display: grid; width: 542px; grid-template-columns: 264px 263px; grid-template-rows: 178px 176px 178px 176px; column-gap: 15px; height: 752px; row-gap: 14.660px; }
  .tile { position: relative; border-radius: 9px; background: #3c4043; font: 600 16.500px Inter, sans-serif; }
  .speaking { box-shadow: inset 0 0 0 5px #669df6; }
  .face { position: relative; width: 80px; height: 80px; margin: 48.500px auto 0; border-radius: 50%; text-align: center; font: 43px/80px Roboto, sans-serif; }
  .speaking .face { box-shadow: 0 0 0 3px #505457, 0 0 0 4px #6a6d70, 0 0 0 17.500px #5a5d60; }
  .tan { background: #8d6e63; } .green { background: #004d40; } .slate { background: #78909c; } .blue { background: #01579b; }
  .brown { background: #5d4037; } .purple { background: #7e57c2; } .indigo { background: #5c6bc0; } .orange { background: #bf360c; }
  .name { position: relative; padding-left: 15px; margin-top: 9px; line-height: 22px; }
  .corner { position: absolute; right: 10px; top: 10px; width: 33px; height: 33px; border-radius: 50%; background: #323639; display: grid; place-items: center; }
  .talk { background: #1a6fdc; }
  .hover {
    position: absolute; left: 48px; top: 60px; width: 166px; height: 56px; box-sizing: border-box; padding: 0 14px 0 18px; border-radius: 28px;
    background: #3c4043a0; box-shadow: 0 1px 2px #0004; color: #a8abae; display: flex; align-items: center; justify-content: space-between;
  }
  .muted { opacity: .5; }
  .pair { display: flex; justify-content: center; padding: 41px 0 0 4px; }
  .pair span { width: 53px; height: 53px; border-radius: 50%; text-align: center; font: 29px/53px Roboto, sans-serif; }
  .pair .green { margin-left: -5px; box-shadow: 0 0 0 2px #3c4043; }
  .others { text-align: center; margin-top: 20px; font: 500 17px/24px Roboto, sans-serif; }

  .controls { height: 99px; padding-left: 23px; display: grid; align-items: center; font: 600 18.500px/24px Inter, sans-serif; grid-template-columns: 104px 17px 582px 949px 1fr; }
  .controls > :global(.label) { padding-bottom: 2px; }
  .controls .rule { width: 2px; height: 22px; background: #d0d0d0; }
  .buttons { display: flex; gap: 15px; }
  .btn { width: 50px; height: 50px; border-radius: 25px; background: #3c4043; display: grid; place-items: center; }
  .red { background: #ea4335; }
  .wide { width: 70px; }
  .side { display: flex; align-items: center; gap: 33px; }
  .counted { position: relative; width: 27px; }
  .counted .ico { margin-left: -2px; }
  .counted em { position: absolute; left: 14px; top: -23px; width: 25px; height: 25px; border-radius: 50%; background: #5f6368; font: 700 14px/25px "Open Sans", sans-serif; text-align: center; }

  .taskbar {
    background: linear-gradient(90deg, #d3d3d4, #d6d7dc 45%, #d6d7dc 70%, #d3d3d3); color: #111; padding-left: 20px; display: grid; align-items: center; font-size: 18px;
    grid-template-columns: 41px 448px 59px 45px 62px 61px 62px 62px 63px 62px 62px 62px 61px 322px 48px 117px 28px 33px 27px 37px 87px 45px 1fr;
  }
  .sky { justify-self: end; margin-right: 11px; }
  .find { width: 429px; height: 49px; box-sizing: border-box; border: 1px solid #c2c2c2; background: #fff; color: #333; display: flex; align-items: center; gap: 14px; padding-left: 13px; font-size: 19px; }
  .taskbar .app { width: 51px; height: 50px; justify-self: center; }
  .taskbar .open { border-bottom: 3px solid #4b4845; padding-top: 3px; }
  .taskbar .lit { width: 61px; background: #eff0f2; }
  .taskbar .badge-host em { left: 29px; top: 22px; width: 20px; height: 20px; background: #5c6bc0; color: #fff; font: 13px/20px Roboto, sans-serif; }
  .taskbar .stack { font-size: 15px; line-height: 23px; }
  .taskbar .notice :global(.cut) { stroke: #d6d6d6; }
  .taskbar .notice em { left: 9px; top: 9px; width: 19px; height: 19px; border: 1px solid #777; background: #d3d3d3; font-size: 15px; line-height: 19px; }
  .peek { width: 1px; height: 50px; background: #aaa; }

  .watermark { position: absolute; left: 1554px; top: 923px; color: #a0a0a0; opacity: .75; font-size: 17.500px; line-height: 24px; }
  .big { font-size: 24px; line-height: 34px; }
</style>
